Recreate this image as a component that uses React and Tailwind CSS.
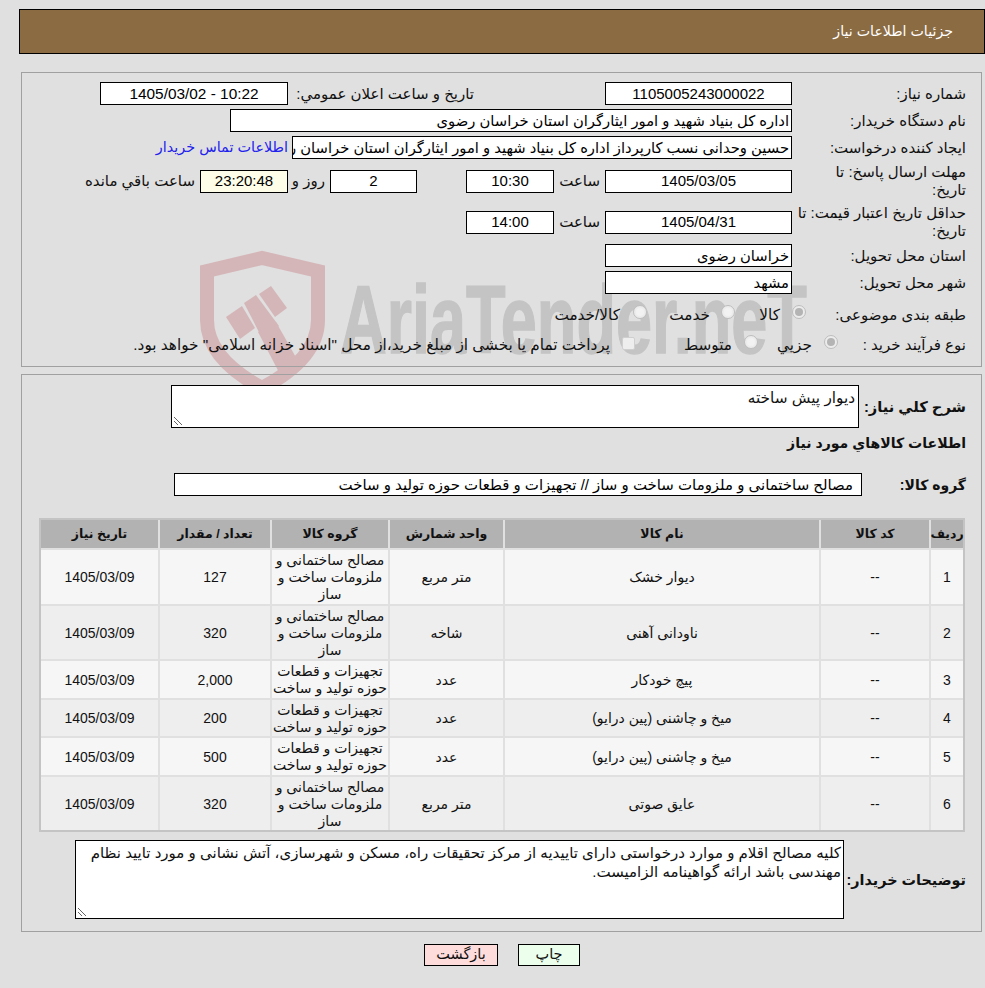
const F = "font-['Liberation_Sans','DejaVu_Sans',sans-serif]";

function Box({ className = "", children }) {
  return (
    <div className={"flex h-[23px] shrink-0 items-center overflow-hidden whitespace-nowrap border border-black bg-white pt-[1px] text-black " + className}>
      {children}
    </div>
  );
}

const num = "justify-center text-[15px]";
const txt = "justify-start pr-[2px] text-[14.75px]";

function Label({ className = "w-[174px]", children }) {
  return <div className={"shrink-0 text-[15px] leading-[18px] text-[#111] " + className}>{children}</div>;
}

function Bold({ className = "", children }) {
  return <div className={"shrink-0 whitespace-nowrap font-bold leading-[18px] text-[#111] " + className}>{children}</div>;
}

function Radio({ on }) {
  return (
    <span className="flex h-[14px] w-[14px] shrink-0 -translate-y-[3px] items-center justify-center rounded-full border border-[#bdbdbd] bg-[#ececec]">
      <span className={"h-[8px] w-[8px] rounded-full " + (on ? "bg-[#b4b4b4]" : "bg-[#f2f2f2]")} />
    </span>
  );
}

function Watermark() {
  return (
    <div dir="ltr" className="pointer-events-none">
      <svg className="absolute left-[198px] top-[248px]" width="130" height="150" viewBox="198 248 130 150" fill="none">
        <path d="M207 271 L262 258 L318 271 V320 C318 345 300 368 262 388 C225 368 207 345 207 320 Z" stroke="#d5b6b8" strokeWidth="14" />
        <g fill="#d5b6b8">
          <path d="M226 317 L242 306 L255 328 L240 339 Z" />
          <path d="M244 303 L256 295 L279 326 L262 338 Z" />
          <path d="M259 294 L271 286 L287 308 L275 317 Z" />
          <path d="M258 332 L276 322 L302 368 L284 382 Z" />
        </g>
      </svg>
      <span className="absolute left-[340px] top-[270px] origin-left scale-x-[0.675] whitespace-nowrap font-['Liberation_Sans',sans-serif] text-[96px] font-bold leading-[100px] text-[#c4c4c4] [-webkit-text-stroke:1.5px_#c4c4c4]">
        AriaTender.neT
      </span>
    </div>
  );
}

function Row({ className = "", children }) {
  return <div className={"flex items-center " + className}>{children}</div>;
}

const G1 = <>مصالح ساختمانی و<br />ملزومات ساخت و<br />ساز</>;
const G2 = <>تجهیزات و قطعات<br />حوزه تولید و ساخت</>;

const rows = [
  ["1", "--", "دیوار خشک", "متر مربع", G1, "127", "h-[54px]", "bg-[#f6f6f6]"],
  ["2", "--", "ناودانی آهنی", "شاخه", G1, "320", "h-[53px]", "bg-[#eeeeee]"],
  ["3", "--", "پیچ خودکار", "عدد", G2, "2,000", "h-[37px]", "bg-[#f6f6f6]"],
  ["4", "--", "میخ و چاشنی (پین درایو)", "عدد", G2, "200", "h-[36px]", "bg-[#eeeeee]"],
  ["5", "--", "میخ و چاشنی (پین درایو)", "عدد", G2, "500", "h-[37px]", "bg-[#f6f6f6]"],
  ["6", "--", "عایق صوتی", "متر مربع", G1, "320", "h-[53px]", "bg-[#eeeeee]"],
];

const cols = "grid grid-cols-[32px_108px_314px_113px_116px_110px_117px] gap-[2px]";

function Grip() {
  return (
    <svg className="absolute bottom-[1px] left-[1px]" width="10" height="10" viewBox="0 0 10 10" stroke="#666" strokeWidth="1">
      <path d="M1 1 L9 9 M1 5 L5 9" />
    </svg>
  );
}

export default function App() {
  return (
    <div dir="rtl" className={"relative min-h-[988px] w-[985px] overflow-hidden bg-[#e0e0e0] pt-[9px] text-[#111] " + F}>
      <Watermark />

      <div className="relative flex h-[45px] w-[966px] items-center border border-black bg-[#8b6b42] pr-[31px] text-[14.2px] text-white">
        جزئیات اطلاعات نیاز
      </div>

      <section className="relative mr-[3px] mt-[18px] h-[295px] w-[961px] border border-[#a0a0a0] pr-[15px] pt-[9px]">
        <Row>
          <Label>شماره نیاز:</Label>
          <Box className={"w-[187px] " + num}>1105005243000022</Box>
          <Label className="mr-[131px] w-[181px] whitespace-nowrap">تاریخ و ساعت اعلان عمومي:</Label>
          <Box className={"mr-[5px] w-[188px] justify-center text-[15.4px]"}>10:22 - 1405/03/02</Box>
        </Row>
        <Row className="mt-[4px]">
          <Label>نام دستگاه خریدار:</Label>
          <Box className={"w-[562px] " + txt}>اداره کل بنیاد شهید و امور ایثارگران استان خراسان رضوی</Box>
        </Row>
        <Row className="mt-[4px]">
          <Label>ایجاد کننده درخواست:</Label>
          <Box className={"w-[500px] " + txt}>حسین وحدانی نسب کارپرداز اداره کل بنیاد شهید و امور ایثارگران استان خراسان رضوی</Box>
          <span className="mr-[4px] whitespace-nowrap text-[14.4px] text-[#2222ee]">اطلاعات تماس خریدار</span>
        </Row>
        <Row className="mt-[4px] h-[36px]">
          <Label>مهلت ارسال پاسخ: تا<br />تاریخ:</Label>
          <Box className={"w-[187px] " + num}>1405/03/05</Box>
          <Label className="mr-[5px] w-[42px] whitespace-nowrap">ساعت</Label>
          <Box className={"mr-[4px] w-[88px] " + num}>10:30</Box>
          <Box className={"mr-[49px] w-[87px] " + num}>2</Box>
          <Label className="mr-[5px] w-[28px] whitespace-nowrap">روز و</Label>
          <Box className={"mr-[9px] w-[88px] !bg-[#fdfde8] " + num}>23:20:48</Box>
          <Label className="mr-[5px] w-[112px] whitespace-nowrap">ساعت باقي مانده</Label>
        </Row>
        <Row className="mt-[5px] h-[36px]">
          <Label>حداقل تاریخ اعتبار قیمت: تا<br />تاریخ:</Label>
          <Box className={"w-[187px] " + num}>1405/04/31</Box>
          <Label className="mr-[5px] w-[42px] whitespace-nowrap">ساعت</Label>
          <Box className={"mr-[4px] w-[88px] " + num}>14:00</Box>
        </Row>
        <Row className="mt-[4px]">
          <Label>استان محل تحویل:</Label>
          <Box className={"w-[187px] " + txt}>خراسان رضوی</Box>
        </Row>
        <Row className="mt-[4px]">
          <Label>شهر محل تحویل:</Label>
          <Box className={"w-[187px] " + txt}>مشهد</Box>
        </Row>
        <Row className="mt-[9px] h-[24px] text-[15.3px]">
          <Label className="w-[160px]">طبقه بندی موضوعی:</Label>
          <Radio on />
          <span className="mr-[12px] w-[20px] whitespace-nowrap">کالا</span>
          <span className="mr-[25px]"><Radio /></span>
          <span className="mr-[11px] w-[39px] whitespace-nowrap">خدمت</span>
          <span className="mr-[24px]"><Radio /></span>
          <span className="mr-[13px] w-[65px] whitespace-nowrap">کالا/خدمت</span>
        </Row>
        <Row className="mt-[6px] h-[24px] text-[15.3px]">
          <Label className="w-[128px] whitespace-nowrap">نوع فرآیند خرید :</Label>
          <Radio on />
          <span className="mr-[12px] w-[34px] whitespace-nowrap">جزيي</span>
          <span className="mr-[20px]"><Radio /></span>
          <span className="mr-[12px] w-[45px] whitespace-nowrap">متوسط</span>
          <span className="mr-[52px] h-[13px] w-[13px] shrink-0 -translate-y-[2px] rounded-[2px] border border-[#cfcfcf] bg-[#eeeeee]" />
          <span className="mr-[12px] whitespace-nowrap">پرداخت تمام یا بخشی از مبلغ خرید،از محل "اسناد خزانه اسلامی" خواهد بود.</span>
        </Row>
      </section>

      <section className="relative mr-[3px] mt-[7px] h-[558px] w-[961px] border border-[#a0a0a0] pr-[15px] pt-[10px]">
        <Row>
          <Bold className="w-[107px] text-[14.7px]">شرح كلي نياز:</Bold>
          <div className="relative h-[43px] w-[688px] border border-black bg-white pr-[3px] pt-[1px] text-[15.3px] leading-[22px]">
            دیوار پیش ساخته
            <Grip />
          </div>
        </Row>
        <div className="mt-[3px] h-[24px] text-[14.1px] font-bold leading-[24px]">اطلاعات کالاهاي مورد نياز</div>
        <Row className="mt-[18px]">
          <Bold className="w-[104px] text-[14px]">گروه کالا:</Bold>
          <Box className="w-[688px] justify-start pr-[8px] text-[14.95px]">مصالح ساختمانی و ملزومات ساخت و ساز // تجهیزات و قطعات حوزه تولید و ساخت</Box>
        </Row>

        <div className="mr-[1px] mt-[22px] w-[926px] border-2 border-[#c4c4c4]">
          <div className={cols + " text-[12.5px]"}>
            {["ردیف", "کد کالا", "نام کالا", "واحد شمارش", "گروه کالا", "تعداد / مقدار", "تاریخ نیاز"].map((h) => (
              <div key={h} className="flex h-[28px] items-center justify-center whitespace-nowrap bg-[#b2b2b2] pt-[1px] font-bold">{h}</div>
            ))}
          </div>
          {rows.map((r) => (
            <div key={r[0]} className={cols + " mt-[2px] text-[14px] leading-[17px]"}>
              {[r[0], r[1], r[2], r[3], r[4], r[5], "1405/03/09"].map((c, i) => (
                <div key={i} className={"flex items-center justify-center whitespace-nowrap pt-[1px] text-center " + r[6] + " " + r[7]}>
                  <div>{c}</div>
                </div>
              ))}
            </div>
          ))}
        </div>

        <Row className="mt-[8px]">
          <Bold className="w-[122px] text-[14.4px]">توضیحات خریدار:</Bold>
          <div className="relative h-[79px] w-[769px] border border-black bg-white px-[2px] pt-[2px] text-[15px] leading-[19px]">
            کلیه مصالح اقلام و موارد درخواستی دارای تاییدیه از مرکز تحقیقات راه، مسکن و شهرسازی، آتش نشانی و مورد تایید نظام مهندسی باشد ارائه گواهینامه الزامیست.
            <Grip />
          </div>
        </Row>
      </section>

      <div className="relative mt-[12px] flex gap-[20px] pr-[405px]">
        <button className="flex h-[22px] w-[62px] items-center justify-center border border-black bg-[#ecffec] text-[14.5px]">چاپ</button>
        <button className="flex h-[22px] w-[74px] items-center justify-center border border-black bg-[#ffdcdc] text-[14.5px]">بازگشت</button>
      </div>
    </div>
  );
}
